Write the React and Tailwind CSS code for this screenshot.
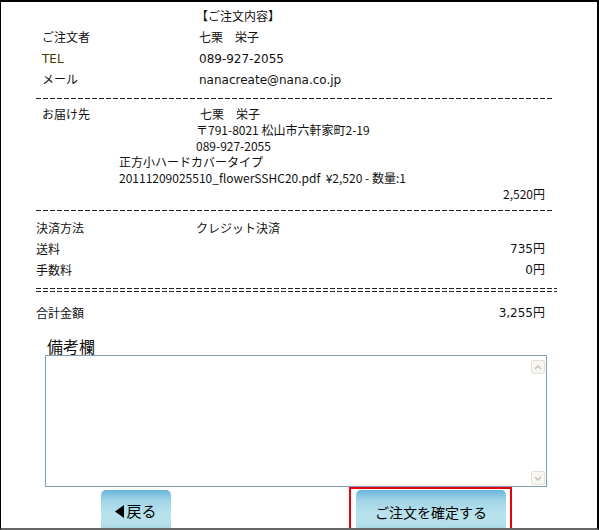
import React from "react";

const JP = "font-['Noto_Sans_CJK_JP',sans-serif]";
const UI = "font-['DejaVu_Sans','Noto_Sans_CJK_JP',sans-serif]";

function Dashes({ width = "w-[518px]" }) {
  return (
    <div
      className={`ml-[35px] h-px ${width} bg-[repeating-linear-gradient(to_right,#2a1a1a_0_5px,transparent_5px_7px)]`}
    />
  );
}

function Equals() {
  return (
    <div className="ml-[35px] w-[521px] flex flex-col gap-[2px]">
      <div className="h-px bg-[repeating-linear-gradient(to_right,#222_0_5px,transparent_5px_7px)]" />
      <div className="h-px bg-[repeating-linear-gradient(to_right,#222_0_5px,transparent_5px_7px)]" />
    </div>
  );
}

function InfoRow({ label, value, labelClass = "" }) {
  return (
    <div className="grid grid-cols-[157px_1fr] pl-[41px] h-[21px] items-center">
      <span className={labelClass}>{label}</span>
      <span>{value}</span>
    </div>
  );
}

function AmountRow({ label, amount }) {
  return (
    <div className="flex items-center justify-between pl-[35px] pr-[52px] h-[21px]">
      <span className={JP}>{label}</span>
      <span className={UI}>{amount}</span>
    </div>
  );
}

function ScrollBox({ up }) {
  return (
    <div className="w-[14px] h-[14px] rounded-[2px] border border-[#e3e1d6] bg-[#f7f6f1] flex items-center justify-center">
      <svg width="8" height="5" viewBox="0 0 8 5">
        <path
          d={up ? "M1 4 L4 1 L7 4" : "M1 1 L4 4 L7 1"}
          fill="none"
          stroke="#c6c3b2"
          strokeWidth="1.5"
        />
      </svg>
    </div>
  );
}

export default function App() {
  return (
    <div className="w-[599px] h-[530px] bg-white overflow-hidden">
      <div className="h-[530px] border-l border-t-2 border-r-2 border-b-2 border-l-black border-t-black border-r-black border-b-[#666] text-[12px] text-[#111] overflow-hidden">
        {/* 注文者 */}
        <div className={`pt-[4px] ${UI}`}>
          <div className="pl-[195px] h-[21px] flex items-center">【ご注文内容】</div>
          <InfoRow label="ご注文者" value="七栗　栄子" />
          <InfoRow label="TEL" value="089-927-2055" labelClass="text-[#4a3800]" />
          <InfoRow label="メール" value="nanacreate@nana.co.jp" />
        </div>
        <div className="mt-[8px]">
          <Dashes />
        </div>

        {/* お届け先 */}
        <div className={`mt-[7px] ${JP} leading-[16px]`}>
          <div className="grid grid-cols-[158px_1fr] pl-[41px] h-[16px]">
            <span>お届け先</span>
            <span>七栗　栄子</span>
          </div>
          <div className="pl-[195px] h-[16px]">〒791-8021 松山市六軒家町2-19</div>
          <div className="pl-[195px] h-[16px]">089-927-2055</div>
          <div className="pl-[118px] h-[16px]">正方小ハードカバータイプ</div>
          <div className="pl-[118px] h-[16px]">
            20111209025510_flowerSSHC20.pdf&nbsp;&nbsp;¥2,520 - 数量:1
          </div>
          <div className="pr-[52px] h-[16px] text-right">2,520円</div>
        </div>
        <div className="mt-[8px]">
          <Dashes />
        </div>

        {/* 決済 */}
        <div className="mt-[6px]">
          <div className={`grid grid-cols-[160px_1fr] pl-[35px] h-[21px] items-center ${JP}`}>
            <span>決済方法</span>
            <span>クレジット決済</span>
          </div>
          <AmountRow label="送料" amount="735円" />
          <AmountRow label="手数料" amount="0円" />
        </div>
        <div className="mt-[8px]">
          <Equals />
        </div>
        <div className="mt-[10px]">
          <AmountRow label="合計金額" amount="3,255円" />
        </div>

        {/* 備考欄 */}
        <div className={`mt-[14px] pl-[46px] h-[18px] leading-[18px] text-[16px] ${JP}`}>備考欄</div>
        <div className="ml-[44px] w-[502px] h-[132px] border border-[#7f9db9] bg-white flex justify-end">
          <div className="flex flex-col justify-between pt-[4px] pb-[1px] pr-[1px]">
            <ScrollBox up />
            <ScrollBox />
          </div>
        </div>

        {/* ボタン */}
        <div className={`flex items-start pl-[100px] ${JP}`}>
          <button className="mt-[3px] w-[70px] h-[44px] rounded-t-[5px] bg-[linear-gradient(to_bottom,#68b4da_0%,#9fd4e8_22%,#b9e2ec_55%,#b4e0eb_80%,#8ccbe3_100%)] flex items-start justify-center pt-[10px] text-[15px] text-black">
            <span className="flex items-center gap-[2px]">
              <svg width="9" height="13" viewBox="0 0 9 13">
                <path d="M9 0 L0 6.5 L9 13 Z" fill="#000" />
              </svg>
              戻る
            </span>
          </button>
          <div className="ml-[178px] w-[163px] h-[45px] border-2 border-[#e8000c] pl-[5px] pr-[4px] pt-px">
            <button className="w-full h-[44px] rounded-t-[5px] bg-[linear-gradient(to_bottom,#68b4da_0%,#9fd4e8_22%,#b9e2ec_55%,#b4e0eb_80%,#8ccbe3_100%)] flex items-start justify-center pt-[12px] text-[14px] text-black">
              ご注文を確定する
            </button>
          </div>
        </div>
      </div>
    </div>
  );
}
